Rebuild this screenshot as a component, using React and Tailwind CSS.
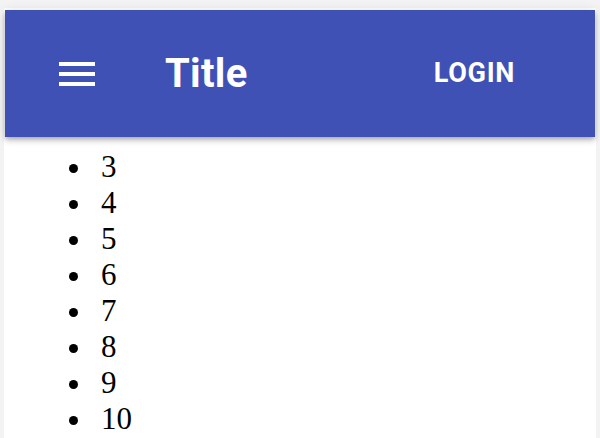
export default function App() {
  const items = [3, 4, 5, 6, 7, 8, 9, 10];
  return (
    <div className="h-[438px] overflow-hidden bg-[#f3f3f3] px-[4px] pt-[8px]">
      <div className="h-full bg-white pt-[2px] px-[1px]">
        <header className="flex h-[127px] items-center bg-[#3f51b5] text-white shadow-[0_2px_4px_-1px_rgba(0,0,0,0.2),0_4px_5px_0_rgba(0,0,0,0.14),0_1px_10px_0_rgba(0,0,0,0.12)] font-['Roboto',sans-serif]">
          <div className="ml-[48px] flex h-[48px] w-[48px] items-center justify-center">
            <svg width="48" height="48" viewBox="0 0 24 24" fill="white">
              <path d="M3 18h18v-2H3v2zm0-5h18v-2H3v2zm0-7v2h18V6H3z" />
            </svg>
          </div>
          <h1 className="ml-[64px] flex-1 text-[40px] font-bold leading-none tracking-[0.3px]">Title</h1>
          <button className="mr-[80px] text-[27px] font-bold uppercase leading-none tracking-[0.7px]">Login</button>
        </header>
        <ul className="mt-[12px] list-disc pl-[89px] font-['Liberation_Serif',serif] text-[31px] leading-[36px] text-black">
          {items.map((n) => (
            <li key={n} className="pl-[7px]">{n}</li>
          ))}
        </ul>
      </div>
    </div>
  );
}
